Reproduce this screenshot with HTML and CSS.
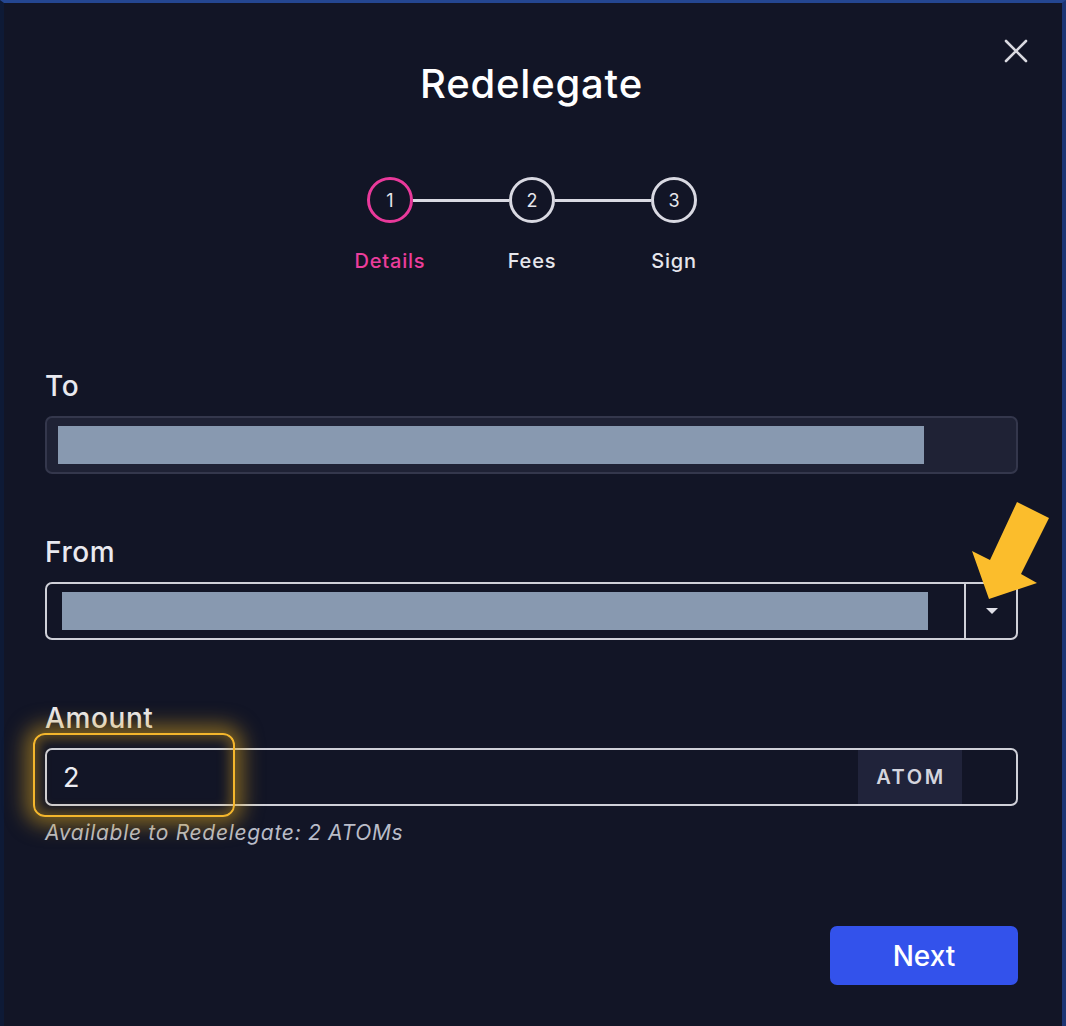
FILE: index.html
```html
<!DOCTYPE html>
<html lang="en">
<head>
<meta charset="utf-8">
<title>Redelegate</title>
<link rel="stylesheet" href="styles.css">
</head>
<body>
<div class="modal">
  <button class="close" aria-label="Close">
    <svg width="24" height="24" viewBox="0 0 24 24"><path d="M2 2 L22 22 M22 2 L2 22" stroke="#d9d9e0" stroke-width="2.6" stroke-linecap="round" fill="none"/></svg>
  </button>
  <h1 class="title">Redelegate</h1>

  <div class="stepper">
    <div class="step-dot active">1</div>
    <div class="step-line"></div>
    <div class="step-dot">2</div>
    <div class="step-line"></div>
    <div class="step-dot">3</div>
  </div>
  <div class="step-labels">
    <span class="step-label active">Details</span>
    <span class="step-label">Fees</span>
    <span class="step-label">Sign</span>
  </div>

  <div class="field field-to">
    <label class="field-label">To</label>
    <div class="box box-readonly">
      <div class="redacted"></div>
    </div>
  </div>

  <div class="field">
    <label class="field-label">From</label>
    <div class="box box-select">
      <div class="redacted"></div>
      <div class="select-btn"><span class="caret"></span></div>
    </div>
  </div>

  <div class="field">
    <label class="field-label">Amount</label>
    <div class="box box-amount">
      <span class="amount-value">2</span>
      <span class="denom">ATOM</span>
    </div>
    <p class="helper">Available to Redelegate: 2 ATOMs</p>
  </div>

  <div class="actions">
    <button class="next">Next</button>
  </div>
</div>

<div class="highlight"></div>
<svg class="arrow" width="100" height="120" viewBox="960 490 100 120">
  <polygon points="989,599 972,551 990,560 1017,502 1049,518 1021,574 1037,583" fill="#fbbd2c"/>
</svg>
</body>
</html>
```

FILE: styles.css
```css
* { box-sizing: border-box; }

html, body {
  margin: 0;
  padding: 0;
  background: #121526;
}

body {
  font-family: Inter, "Noto Sans", "Liberation Sans", sans-serif;
  color: #e6e6ec;
  width: 1066px;
  height: 1026px;
  overflow: hidden;
}

.modal {
  position: relative;
  width: 1066px;
  height: 1026px;
  border-top: 3px solid #244691;
  border-left: 4px solid #0e1a36;
  border-right: 4px solid #1c3574;
  padding: 58px 44px 0 41px;
  background: #121526;
}

.close {
  position: absolute;
  top: 36px;
  right: 34px;
  width: 24px;
  height: 24px;
  padding: 0;
  border: 0;
  background: transparent;
  cursor: pointer;
}
.close svg { display: block; }

.title {
  margin: 0;
  text-align: center;
  font-size: 40px;
  line-height: 46px;
  font-weight: 500;
  color: #ffffff;
  letter-spacing: 0.8px;
}

.stepper {
  margin-top: 70px;
  display: flex;
  align-items: center;
  justify-content: center;
  padding-left: 1px;
}

.step-dot {
  width: 46px;
  height: 46px;
  border-radius: 50%;
  border: 3px solid #d9d9e2;
  display: flex;
  align-items: center;
  justify-content: center;
  font-size: 18px;
  font-weight: 400;
  color: #e6e6ec;
}
.step-dot.active { border-color: #e9399b; }

.step-line {
  width: 96px;
  height: 3px;
  background: #d9d9e2;
}

.step-labels {
  margin-top: 25px;
  display: grid;
  grid-template-columns: 142px 142px 142px;
  justify-content: center;
  padding-left: 1px;
}
.step-label {
  text-align: center;
  font-size: 20px;
  line-height: 26px;
  font-weight: 500;
  letter-spacing: 0.8px;
  color: #e6e6ec;
}
.step-label.active { color: #ec3d9c; }

.field-to { margin-top: 95px; }
.field + .field { margin-top: 61px; }

.field-label {
  display: block;
  font-size: 28px;
  line-height: 34px;
  font-weight: 500;
  color: #e9e9ef;
  margin-bottom: 13px;
  letter-spacing: 0.6px;
}

.box {
  height: 58px;
  border-radius: 7px;
  display: flex;
  align-items: stretch;
}

.box-readonly {
  background: #1f2235;
  border: 2px solid #34374c;
  padding: 8px 0 8px 11px;
}

.redacted {
  width: 866px;
  height: 38px;
  background: #8899b0;
}

.box-select {
  border: 2px solid #cfd0d8;
  padding: 8px 0 8px 15px;
  position: relative;
}
.select-btn {
  margin-left: auto;
  width: 52px;
  margin-top: -8px;
  margin-bottom: -8px;
  border-left: 2px solid #cfd0d8;
  display: flex;
  align-items: center;
  justify-content: center;
}
.caret {
  width: 0;
  height: 0;
  border-left: 6px solid transparent;
  border-right: 6px solid transparent;
  border-top: 6px solid #e0e0e8;
  margin-left: 2px;
}

.box-amount {
  border: 2px solid #cfd0d8;
  align-items: center;
  padding: 0 54px 0 16px;
}
.amount-value {
  font-size: 27px;
  color: #ececf2;
}
.denom {
  margin-left: auto;
  align-self: stretch;
  width: 104px;
  background: #20233a;
  display: flex;
  align-items: center;
  justify-content: center;
  font-size: 20px;
  font-weight: 600;
  letter-spacing: 2.6px;
  padding-left: 2px;
  color: #d4d5de;
}

.helper {
  margin: 15px 0 0;
  font-size: 21px;
  line-height: 24px;
  font-style: italic;
  letter-spacing: 0.7px;
  color: #b9bcc8;
}

.actions {
  margin-top: 81px;
  display: flex;
  justify-content: flex-end;
}
.next {
  width: 188px;
  height: 59px;
  border: 0;
  border-radius: 7px;
  background: #3352eb;
  color: #ffffff;
  font-family: inherit;
  font-size: 28px;
  font-weight: 500;
  cursor: pointer;
}

.highlight {
  position: absolute;
  left: 33px;
  top: 733px;
  width: 202px;
  height: 84px;
  border: 2px solid #f4b62c;
  border-radius: 12px;
  box-shadow: 0 0 20px 8px rgba(214, 160, 30, 0.55), inset 0 0 12px 4px rgba(214, 160, 30, 0.4);
  pointer-events: none;
}

.arrow {
  position: absolute;
  left: 960px;
  top: 490px;
  pointer-events: none;
}
```
